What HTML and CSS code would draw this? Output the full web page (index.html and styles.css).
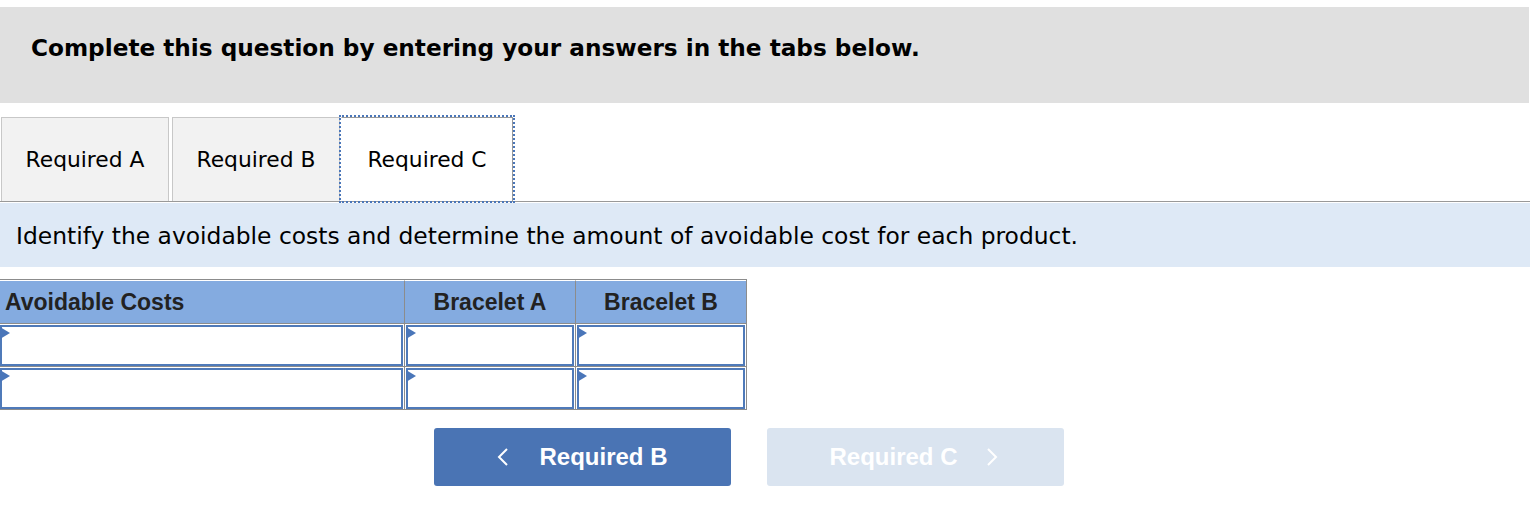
FILE: index.html
```html
<!DOCTYPE html>
<html>
<head>
<meta charset="utf-8">
<link rel="stylesheet" href="styles.css">
</head>
<body>
<div class="banner">Complete this question by entering your answers in the tabs below.</div>
<div class="tabs">
  <div class="tab">Required A</div>
  <div class="tab">Required B</div>
  <div class="tab active">Required C</div>
</div>
<div class="instr">Identify the avoidable costs and determine the amount of avoidable cost for each product.</div>
<table class="grid">
  <thead>
    <tr>
      <th class="c1">Avoidable Costs</th>
      <th class="c2">Bracelet A</th>
      <th class="c3">Bracelet B</th>
    </tr>
  </thead>
  <tbody>
    <tr>
      <td class="c1"><div class="field"><span class="flag"></span></div></td>
      <td class="c2"><div class="field"><span class="flag"></span></div></td>
      <td class="c3"><div class="field"><span class="flag"></span></div></td>
    </tr>
    <tr>
      <td class="c1"><div class="field"><span class="flag"></span></div></td>
      <td class="c2"><div class="field"><span class="flag"></span></div></td>
      <td class="c3"><div class="field"><span class="flag"></span></div></td>
    </tr>
  </tbody>
</table>
<div class="nav">
  <div class="btn prev">
    <svg class="chev" width="12" height="18" viewBox="0 0 12 18"><polyline points="10,1 2,9 10,17" fill="none" stroke="#fff" stroke-width="2"/></svg>
    <span>Required B</span>
  </div>
  <div class="btn next">
    <span>Required C</span>
    <svg class="chev" width="12" height="18" viewBox="0 0 12 18"><polyline points="2,1 10,9 2,17" fill="none" stroke="#fff" stroke-width="2"/></svg>
  </div>
</div>
</body>
</html>
```
FILE: styles.css
```css
html, body {
  margin: 0;
  padding: 0;
  background: #fff;
}
body {
  font-family: "DejaVu Sans", Verdana, sans-serif;
  color: #000;
}
.banner {
  margin-top: 7px;
  height: 96px;
  box-sizing: border-box;
  padding: 27px 0 0 31px;
  background: #e0e0e0;
  font-weight: bold;
  font-size: 23.2px;
  line-height: 28px;
  margin-right: 1px;
}
.tabs {
  margin-top: 14px;
  display: flex;
  border-bottom: 1px solid #999;
  padding-left: 1px;
  gap: 3px;
}
.tab {
  height: 84px;
  box-sizing: border-box;
  border: 1px solid #c8c8c8;
  border-bottom: none;
  background: #f2f2f2;
  display: flex;
  align-items: center;
  justify-content: center;
  font-size: 21.8px;
  padding: 0 10px;
  width: 168px;
}
.tab.active {
  background: #fff;
  width: 172px;
  margin-left: -2px;
  outline: 2px dotted #4a76b9;
  outline-offset: 0;
  border-color: #999;
  border-left-color: transparent;
}
.instr {
  margin-top: 1px;
  height: 64px;
  box-sizing: border-box;
  padding: 2px 0 0 16px;
  background: #dee9f6;
  display: flex;
  align-items: center;
  font-size: 23.4px;
}
.grid {
  margin-top: 12px;
  border-collapse: separate;
  border-spacing: 0;
  border: 1px solid #8c8c8c;
  border-left: none;
  border-top: 1px solid #8c8c8c;
  font-family: "Liberation Sans", Arial, sans-serif;
}
.grid th {
  height: 42px;
  padding: 0;
  background: #84abe0;
  font-size: 23px;
  font-weight: bold;
  color: #222;
  border-top: 1px solid #fff;
  border-bottom: 1px solid #8c8c8c;
}
.grid th.c1 {
  text-align: left;
  padding-left: 5px;
}
.grid th.c2, .grid th.c3 {
  text-align: center;
  border-left: 1px solid #8c8c8c;
}
.grid td {
  padding: 0;
  height: 42px;
}
.grid td.c2, .grid td.c3 {
  border-left: 1px solid #8c8c8c;
}
.grid tbody tr:first-child td {
  border-bottom: 1px solid #8c8c8c;
}
.c1 { width: 404px; }
.c2 { width: 170px; }
.c3 { width: 170px; }
.grid th.c1 { width: 399px; }
.field {
  position: relative;
  height: 41px;
  box-sizing: border-box;
  border: 2px solid #4f7ab9;
  margin: 0 1px;
  background: #fff;
}
.grid td.c1 .field { margin-left: 0; }
.flag {
  position: absolute;
  left: -2px;
  top: 0;
  width: 0;
  height: 0;
  border-left: 10px solid #4a76b9;
  border-top: 6px solid transparent;
  border-bottom: 6px solid transparent;
}
.nav {
  margin-top: 18px;
  margin-left: 434px;
  display: flex;
  gap: 36px;
}
.btn {
  width: 297px;
  height: 58px;
  border-radius: 3px;
  display: flex;
  align-items: center;
  justify-content: center;
  gap: 30px;
  font-family: "Liberation Sans", Arial, sans-serif;
  font-weight: bold;
  font-size: 24px;
  color: #fff;
}
.btn.prev { background: #4a74b4; }
.btn.next { background: #dae4f0; gap: 28px; padding-right: 4px; box-sizing: border-box; }
.chev { display: block; }
```
